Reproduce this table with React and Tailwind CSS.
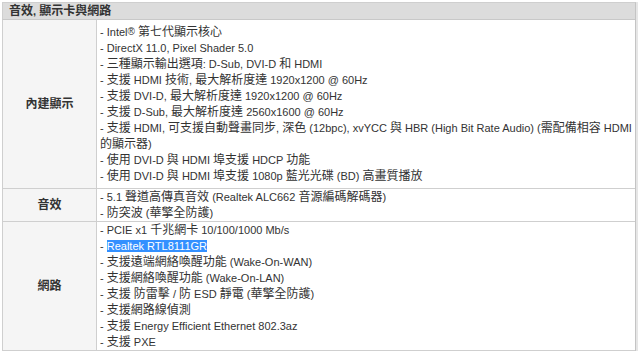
const rows = [
  {
    label: "內建顯示",
    pad: "py-[4px]",
    items: [
      <>- Intel<sup className="text-[10px] relative -top-[1px]">®</sup> <Txt s="第七代顯示核心" /></>,
      "- DirectX 11.0, Pixel Shader 5.0",
      "- 三種顯示輸出選項: D-Sub, DVI-D 和 HDMI",
      "- 支援 HDMI 技術, 最大解析度達 1920x1200 @ 60Hz",
      "- 支援 DVI-D, 最大解析度達 1920x1200 @ 60Hz",
      "- 支援 D-Sub, 最大解析度達 2560x1600 @ 60Hz",
      "- 支援 HDMI, 可支援自動聲畫同步, 深色 (12bpc), xvYCC 與 HBR (High Bit Rate Audio) (需配備相容 HDMI",
      "的顯示器)",
      "- 使用 DVI-D 與 HDMI 埠支援 HDCP 功能",
      "- 使用 DVI-D 與 HDMI 埠支援 1080p 藍光光碟 (BD) 高畫質播放",
    ],
  },
  {
    label: "音效",
    pad: "py-0",
    items: [
      "- 5.1 聲道高傳真音效 (Realtek ALC662 音源編碼解碼器)",
      "- 防突波 (華擎全防護)",
    ],
  },
  {
    label: "網路",
    pad: "py-0",
    items: [
      "- PCIE x1 千兆網卡 10/100/1000 Mb/s",
      <>- <span className="bg-[#3390ff] text-white">Realtek RTL8111GR</span></>,
      "- 支援遠端網絡喚醒功能 (Wake-On-WAN)",
      "- 支援網絡喚醒功能 (Wake-On-LAN)",
      "- 支援 防雷擊 / 防 ESD 靜電 (華擎全防護)",
      "- 支援網路線偵測",
      "- 支援 Energy Efficient Ethernet 802.3az",
      "- 支援 PXE",
    ],
  },
];

// CJK glyphs render a bit larger than the latin text in the original page
function Txt({ s }) {
  const parts = s.split(/([\u3000-\u9fff\uff00-\uffef]+)/);
  return parts.map((p, i) =>
    i % 2 ? (
      <span key={i} className="text-[12px]">{p}</span>
    ) : (
      p
    )
  );
}

export default function App() {
  return (
    <div
      className="w-[640px] h-[351px] overflow-hidden bg-white pt-[2px] pl-[2px] text-[11px] text-[#333]"
      style={{ fontFamily: '"Liberation Sans", "Noto Sans CJK TC", sans-serif' }}
    >
      <div className="w-[634px] border-t border-[#cfcfcf] border-r border-r-[#c4c4c4] shadow-[2px_0_0_#e6e6e6]">
        <div className="h-[17px] bg-[#dcdcdc] border-b border-[#c8c8c8] border-l border-l-[#cfcfcf] pl-[6px] font-bold leading-[16px] text-[#333]">
          <Txt s="音效, 顯示卡與網路" />
        </div>
        {rows.map((row) => (
          <div key={row.label} className="flex border-b border-[#cfcfcf]">
            <div className="w-[95px] shrink-0 bg-[#f5f5f5] border-l border-[#cfcfcf] border-r border-r-[#cfcfcf] flex items-center justify-center font-bold">
              <Txt s={row.label} />
            </div>
            <div className={`flex-1 pl-[3px] pr-[4px] ${row.pad}`}>
              {row.items.map((item, i) => (
                <div key={i} className="h-[16px] leading-[16px] whitespace-nowrap">
                  {typeof item === "string" ? <Txt s={item} /> : item}
                </div>
              ))}
            </div>
          </div>
        ))}
      </div>
    </div>
  );
}
